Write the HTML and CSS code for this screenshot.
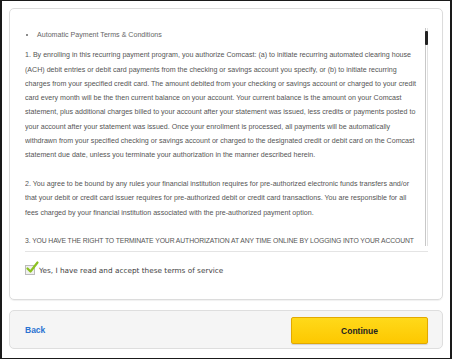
FILE: index.html
```html
<!DOCTYPE html>
<html lang="en">
<head>
    <meta charset="UTF-8">
    <title>Automatic Payment Terms</title>
    <link rel="stylesheet" href="styles.css">
</head>
<body>
    <div class="frame">
        <div class="terms">
            <div class="terms__scroll">
                <div class="terms__text">
                    <ul class="terms__title">
                        <li>Automatic Payment Terms &amp; Conditions</li>
                    </ul>
                    <p>1. By enrolling in this recurring payment program, you authorize Comcast: (a) to initiate recurring automated clearing house (ACH) debit entries or debit card payments from the checking or savings account you specify, or (b) to initiate recurring charges from your specified credit card. The amount debited from your checking or savings account or charged to your credit card every month will be the then current balance on your account. Your current balance is the amount on your Comcast statement, plus additional charges billed to your account after your statement was issued, less credits or payments posted to your account after your statement was issued. Once your enrollment is processed, all payments will be automatically withdrawn from your specified checking or savings account or charged to the designated credit or debit card on the Comcast statement due date, unless you terminate your authorization in the manner described herein.</p>
                    <p>2. You agree to be bound by any rules your financial institution requires for pre-authorized electronic funds transfers and/or<br>that your debit or credit card issuer requires for pre-authorized debit or credit card transactions. You are responsible for all<br>fees charged by your financial institution associated with the pre-authorized payment option.</p>
                    <p class="terms__caps">3. YOU HAVE THE RIGHT TO TERMINATE YOUR AUTHORIZATION AT ANY TIME ONLINE BY LOGGING INTO YOUR ACCOUNT AND CANCELLING AUTOMATIC PAYMENTS OR BY CALLING CUSTOMER SERVICE.</p>
                </div>
                <div class="terms__track">
                    <div class="terms__thumb"></div>
                </div>
            </div>
            <label class="accept">
                <span class="accept__box">
                    <svg width="14" height="13" viewBox="0 0 14 13"><path d="M2.5 7.5 L5.5 10.5 L12.5 1.5" fill="none" stroke="#8cc11f" stroke-width="2.2" stroke-linecap="round" stroke-linejoin="round"/></svg>
                </span>
                Yes, I have read and accept these terms of service
            </label>
        </div>
        <div class="actions">
            <a class="actions__back" href="#">Back</a>
            <button class="actions__continue" type="button">Continue</button>
        </div>
    </div>
</body>
</html>
```

FILE: styles.css
```css
body {
    margin: 0;
    padding: 0;
    background: #fff;
}

.frame {
    width: 452px;
    height: 359px;
    box-sizing: border-box;
    border: 1px solid #1a1a1a;
    border-left-width: 2px;
    border-right-width: 2px;
    padding: 7px 7px 0 7px;
    display: flex;
    flex-direction: column;
    gap: 10px;
    font-family: "Liberation Sans", Arial, sans-serif;
}

.terms {
    height: 292px;
    box-sizing: border-box;
    border: 1px solid #dcdcdc;
    border-radius: 5px;
    box-shadow: 0 1px 1px rgba(0,0,0,0.06);
    padding: 19px 14px 0 15px;
}

.terms__scroll {
    display: flex;
    height: 218px;
    overflow: hidden;
}

.terms__text {
    width: 400px;
    font-size: 7.1px;
    line-height: 14.3px;
    color: #555;
}

.terms__text p {
    margin: 0 0 14.3px 0;
}

.terms__text .terms__caps {
    font-size: 6.8px;
    letter-spacing: -0.1px;
}

.terms__title {
    margin: 0 0 6px 0;
    padding-left: 12px;
    color: #666;
}

.terms__title li {
    list-style: disc;
}

.terms__track {
    width: 3px;
    margin-left: 2px;
    box-sizing: border-box;
    border-left: 1px solid #c8c8c8;
    border-right: 1px solid #e2e2e2;
    padding-top: 3px;
}

.terms__thumb {
    height: 14px;
    margin-left: -1px;
    width: 3px;
    background: #222;
    border-radius: 1px;
}

.accept {
    display: flex;
    align-items: center;
    gap: 4px;
    margin-top: 5px;
    padding-top: 13px;
    border-top: 1px solid #e4e4e4;
    font-family: "DejaVu Sans", Verdana, sans-serif;
    font-size: 7.3px;
    color: #444;
}

.accept__box {
    position: relative;
    width: 10px;
    height: 10px;
    box-sizing: border-box;
    border: 1px solid #bbb;
    background: #f0f0f0;
}

.accept__box svg {
    position: absolute;
    left: -1px;
    top: -5px;
}

.actions {
    height: 39px;
    box-sizing: border-box;
    border: 1px solid #dedede;
    border-radius: 5px;
    background: #f5f5f5;
    display: flex;
    align-items: center;
    justify-content: space-between;
    padding: 0 14px 0 15px;
}

.actions__back {
    font-size: 8.5px;
    font-weight: bold;
    color: #2b73d2;
    text-decoration: none;
}

.actions__continue {
    width: 137px;
    height: 27px;
    border: 1px solid #e2a900;
    border-radius: 2px;
    background: linear-gradient(#ffd91a, #fdc800);
    box-shadow: 0 1px 1px rgba(0,0,0,0.15);
    font-family: "Liberation Sans", Arial, sans-serif;
    font-size: 8.5px;
    font-weight: bold;
    color: #222;
    margin-top: 2px;
}
```
